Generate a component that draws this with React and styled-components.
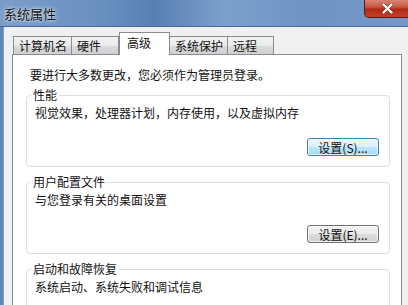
import React from 'react'
import styled, { createGlobalStyle } from 'styled-components'

const Global = createGlobalStyle`
  html, body {
    margin: 0;
    padding: 0;
    width: 408px;
    height: 305px;
    overflow: hidden;
    background: #f0f0f0;
  }
  body {
    font-family: "Noto Sans CJK SC", "Noto Sans", sans-serif;
    font-size: 12px;
    color: #111;
  }
`

const tabs = [
  { label: '计算机名', width: 59 },
  { label: '硬件', width: 47 },
  { label: '高级', width: 51, active: true },
  { label: '系统保护', width: 58 },
  { label: '远程', width: 46 }
]

const groups = [
  { title: '性能', desc: '视觉效果，处理器计划，内存使用，以及虚拟内存', btn: '设置(S)...', focus: true },
  { title: '用户配置文件', desc: '与您登录有关的桌面设置', btn: '设置(E)...' },
  { title: '启动和故障恢复', desc: '系统启动、系统失败和调试信息', btn: '设置(T)...' }
]

export default function App() {
  return (
    <Window>
      <Global />
      <TitleBar>
        <Title>系统属性</Title>
        <Close>
          <svg width='13' height='11' viewBox='0 0 13 11'>
            <path d='M2.5 1.5 L10.5 9.5 M10.5 1.5 L2.5 9.5' stroke='#5a1208' strokeWidth='3.6' strokeLinecap='round' opacity='0.5' />
            <path d='M2.5 1.5 L10.5 9.5 M10.5 1.5 L2.5 9.5' stroke='#fff' strokeWidth='2.4' strokeLinecap='round' />
          </svg>
        </Close>
      </TitleBar>
      <Body>
        <TabRow>
          {tabs.map(t => (
            <Tab key={t.label} active={t.active} w={t.width}>
              {t.label}
            </Tab>
          ))}
        </TabRow>
        <Panel>
          <Intro>要进行大多数更改，您必须作为管理员登录。</Intro>
          {groups.map(g => (
            <Group key={g.title}>
              <Legend>{g.title}</Legend>
              <Desc>{g.desc}</Desc>
              <BtnRow>
                <Button focus={g.focus}>{g.btn}</Button>
              </BtnRow>
            </Group>
          ))}
        </Panel>
      </Body>
    </Window>
  )
}

const Window = styled.div`
  width: 408px;
  height: 305px;
  display: flex;
  flex-direction: column;
  background-color: #5f86b8;
  overflow: hidden;
`

const TitleBar = styled.div`
  height: 26px;
  flex-shrink: 0;
  display: flex;
  justify-content: space-between;
  align-items: flex-start;
  background-color: #6f94c4;
  background-image: linear-gradient(
    to right,
    #7a9dca 0%,
    #6a90c1 25%,
    #587fb3 38%,
    #7da0cc 55%,
    #6f94c4 75%,
    #7598c6 100%
  );
  border-bottom: 1px solid #44699c;
`

const Title = styled.div`
  padding: 5px 0 0 4px;
  font-size: 13px;
  line-height: 17px;
  color: #101010;
  text-shadow: 0 0 5px rgba(255, 255, 255, 0.85), 0 0 2px rgba(255, 255, 255, 0.8);
`

const Close = styled.div`
  flex-shrink: 0;
  width: 46px;
  height: 18px;
  box-sizing: border-box;
  margin-right: -2px;
  display: flex;
  align-items: center;
  justify-content: center;
  border: 1px solid #5e1a12;
  border-top: none;
  border-radius: 0 0 0 5px;
  background-color: #c23a24;
  background-image: linear-gradient(to bottom, #d98474 0%, #c9583f 40%, #b02a16 55%, #c63e28 100%);
`

const Body = styled.div`
  flex: 1;
  margin-left: 3px;
  border-left: 1px solid #8b9cb3;
  background: #f0f0f0;
  padding: 5px 0 0 8px;
  display: flex;
  flex-direction: column;
`

const TabRow = styled.div`
  display: flex;
  align-items: flex-end;
  height: 23px;
  padding-left: 1px;
  margin-bottom: -1px;
  position: relative;
  z-index: 1;
`

const Tab = styled.div`
  box-sizing: border-box;
  width: ${p => p.w}px;
  height: ${p => (p.active ? 23 : 19)}px;
  padding: ${p => (p.active ? '2px 0 0 7px' : '0 0 0 5px')};
  display: flex;
  align-items: ${p => (p.active ? 'flex-start' : 'center')};
  font-size: 12px;
  line-height: 16px;
  border: 1px solid #898c95;
  border-bottom: ${p => (p.active ? 'none' : '1px solid #898c95')};
  border-left-width: ${p => (p.active ? 1 : 0)}px;
  background: ${p =>
    p.active ? '#fff' : 'linear-gradient(to bottom, #f2f2f2, #ebebeb 50%, #dcdcdc 51%, #cfcfcf)'};
  &:first-child {
    border-left-width: 1px;
  }
`

const Panel = styled.div`
  flex: 1;
  width: 390px;
  box-sizing: border-box;
  background: #fff;
  border: 1px solid #898c95;
  padding: 12px 11px 0 13px;
`

const Intro = styled.div`
  padding-left: 4px;
  line-height: 16px;
  margin-bottom: 4px;
`

const Group = styled.fieldset`
  margin: 0 0 7px 0;
  padding: 2px 10px 10px 8px;
  border: 1px solid #d5dfe5;
  border-radius: 4px;
  min-width: 0;
`

const Legend = styled.legend`
  margin-left: -4px;
  padding: 0 2px;
  line-height: 16px;
`

const Desc = styled.div`
  line-height: 16px;
`

const BtnRow = styled.div`
  display: flex;
  justify-content: flex-end;
  margin-top: 17px;
`

const Button = styled.div`
  width: 72px;
  height: 18px;
  box-sizing: border-box;
  display: flex;
  align-items: center;
  justify-content: center;
  font-size: 12px;
  border-radius: 3px;
  border: 1px solid ${p => (p.focus ? '#3c7fb1' : '#707070')};
  background: ${p =>
    p.focus
      ? 'linear-gradient(to bottom, #eaf6fd, #d9f0fc 50%, #bee6fd 51%, #a7d9f5)'
      : 'linear-gradient(to bottom, #f2f2f2, #ebebeb 50%, #dddddd 51%, #cfcfcf)'};
  box-shadow: inset 0 0 0 1px rgba(255, 255, 255, 0.7);
`
